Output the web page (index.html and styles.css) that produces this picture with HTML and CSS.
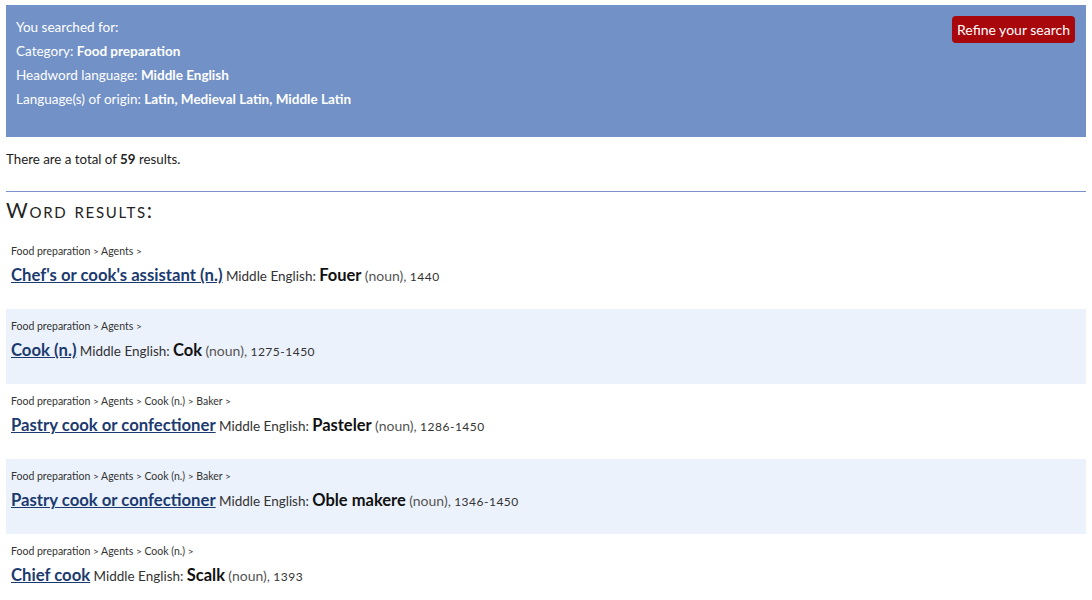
FILE: index.html
```
<!DOCTYPE html>
<html lang="en">
<head>
  <meta charset="UTF-8">
  <title>Search results</title>
  <link rel="stylesheet" href="styles.css">
</head>
<body>

  <!-- search summary -->
  <div class="summary">
    <div class="summary-text">
      <p>You searched for:</p>
      <p>Category: <b>Food preparation</b></p>
      <p>Headword language: <b>Middle English</b></p>
      <p>Language(s) of origin: <b>Latin, Medieval Latin, Middle Latin</b></p>
    </div>
    <button type="button" class="refine">Refine your search</button>
  </div>

  <p class="total">There are a total of <b>59</b> results.</p>

  <hr class="divider">

  <h2 class="section-title">Word results:</h2>

  <div class="results">
    <div class="result">
      <div class="crumbs">Food preparation <span class="sep">&gt;</span> Agents <span class="sep">&gt;</span></div>
      <div class="entry"><a href="#">Chef's or cook's assistant (n.)</a> <span class="lang">Middle English:</span> <span class="word">Fouer</span> <span class="pos">(noun),</span> <span class="date">1440</span></div>
    </div>
    <div class="result">
      <div class="crumbs">Food preparation <span class="sep">&gt;</span> Agents <span class="sep">&gt;</span></div>
      <div class="entry"><a href="#">Cook (n.)</a> <span class="lang">Middle English:</span> <span class="word">Cok</span> <span class="pos">(noun),</span> <span class="date">1275-1450</span></div>
    </div>
    <div class="result">
      <div class="crumbs">Food preparation <span class="sep">&gt;</span> Agents <span class="sep">&gt;</span> Cook (n.) <span class="sep">&gt;</span> Baker <span class="sep">&gt;</span></div>
      <div class="entry"><a href="#">Pastry cook or confectioner</a> <span class="lang">Middle English:</span> <span class="word">Pasteler</span> <span class="pos">(noun),</span> <span class="date">1286-1450</span></div>
    </div>
    <div class="result">
      <div class="crumbs">Food preparation <span class="sep">&gt;</span> Agents <span class="sep">&gt;</span> Cook (n.) <span class="sep">&gt;</span> Baker <span class="sep">&gt;</span></div>
      <div class="entry"><a href="#">Pastry cook or confectioner</a> <span class="lang">Middle English:</span> <span class="word">Oble makere</span> <span class="pos">(noun),</span> <span class="date">1346-1450</span></div>
    </div>
    <div class="result">
      <div class="crumbs">Food preparation <span class="sep">&gt;</span> Agents <span class="sep">&gt;</span> Cook (n.) <span class="sep">&gt;</span></div>
      <div class="entry"><a href="#">Chief cook</a> <span class="lang">Middle English:</span> <span class="word">Scalk</span> <span class="pos">(noun),</span> <span class="date">1393</span></div>
    </div>
  </div>

</body>
</html>
```

FILE: styles.css
```
html, body {
  margin: 0;
  padding: 0;
}

body {
  margin: 5px 6px;
  font-family: Lato, "Open Sans", sans-serif;
  font-size: 13px;
  color: #222;
  background: #fff;
}

p {
  margin: 0;
}

/* 검색 조건 박스 */
.summary {
  display: flex;
  justify-content: space-between;
  align-items: flex-start;
  background-color: #7191c7;
  color: #fff;
  padding: 10px 11px 26px 10px;
}

.summary-text p {
  line-height: 24px;
  font-size: 13.5px;
}

.summary-text b {
  font-weight: 700;
}

.refine {
  margin-top: 1px;
  background-color: #a8070b;
  color: #fff;
  border: none;
  border-radius: 4px;
  font-family: Lato, "Open Sans", sans-serif;
  font-size: 14px;
  padding: 0 5px;
  height: 27px;
  cursor: pointer;
}

.total {
  margin-top: 12px;
  line-height: 20px;
  font-size: 13.3px;
}

.divider {
  margin: 22px 0 0 0;
  border: none;
  border-top: 1px solid #7a92c8;
}

.section-title {
  margin: 6px 0 12px 0;
  font-size: 21px;
  line-height: 24px;
  font-weight: 400;
  font-variant: small-caps;
  letter-spacing: 1.7px;
  color: #222;
}

/* 결과 목록 */
.result {
  box-sizing: border-box;
  height: 75px;
  padding: 9px 5px 0 5px;
}

.result:nth-child(even) {
  background-color: #ecf2fc;
}

.crumbs {
  font-size: 10.5px;
  line-height: 16px;
  color: #333;
}

.crumbs .sep {
  font-size: 10px;
}

.entry {
  margin-top: 5px;
  height: 22px;
  line-height: 22px;
}

.entry a {
  font-size: 16.7px;
  font-weight: 700;
  color: #1b3a6f;
  text-decoration: underline;
}

.lang {
  font-size: 13.5px;
  color: #333;
}

.word {
  font-size: 16.5px;
  font-weight: 700;
  color: #111;
}

.pos {
  font-size: 14px;
  color: #555;
}

.date {
  font-size: 12px;
  color: #333;
  letter-spacing: 0.5px;
}
```
